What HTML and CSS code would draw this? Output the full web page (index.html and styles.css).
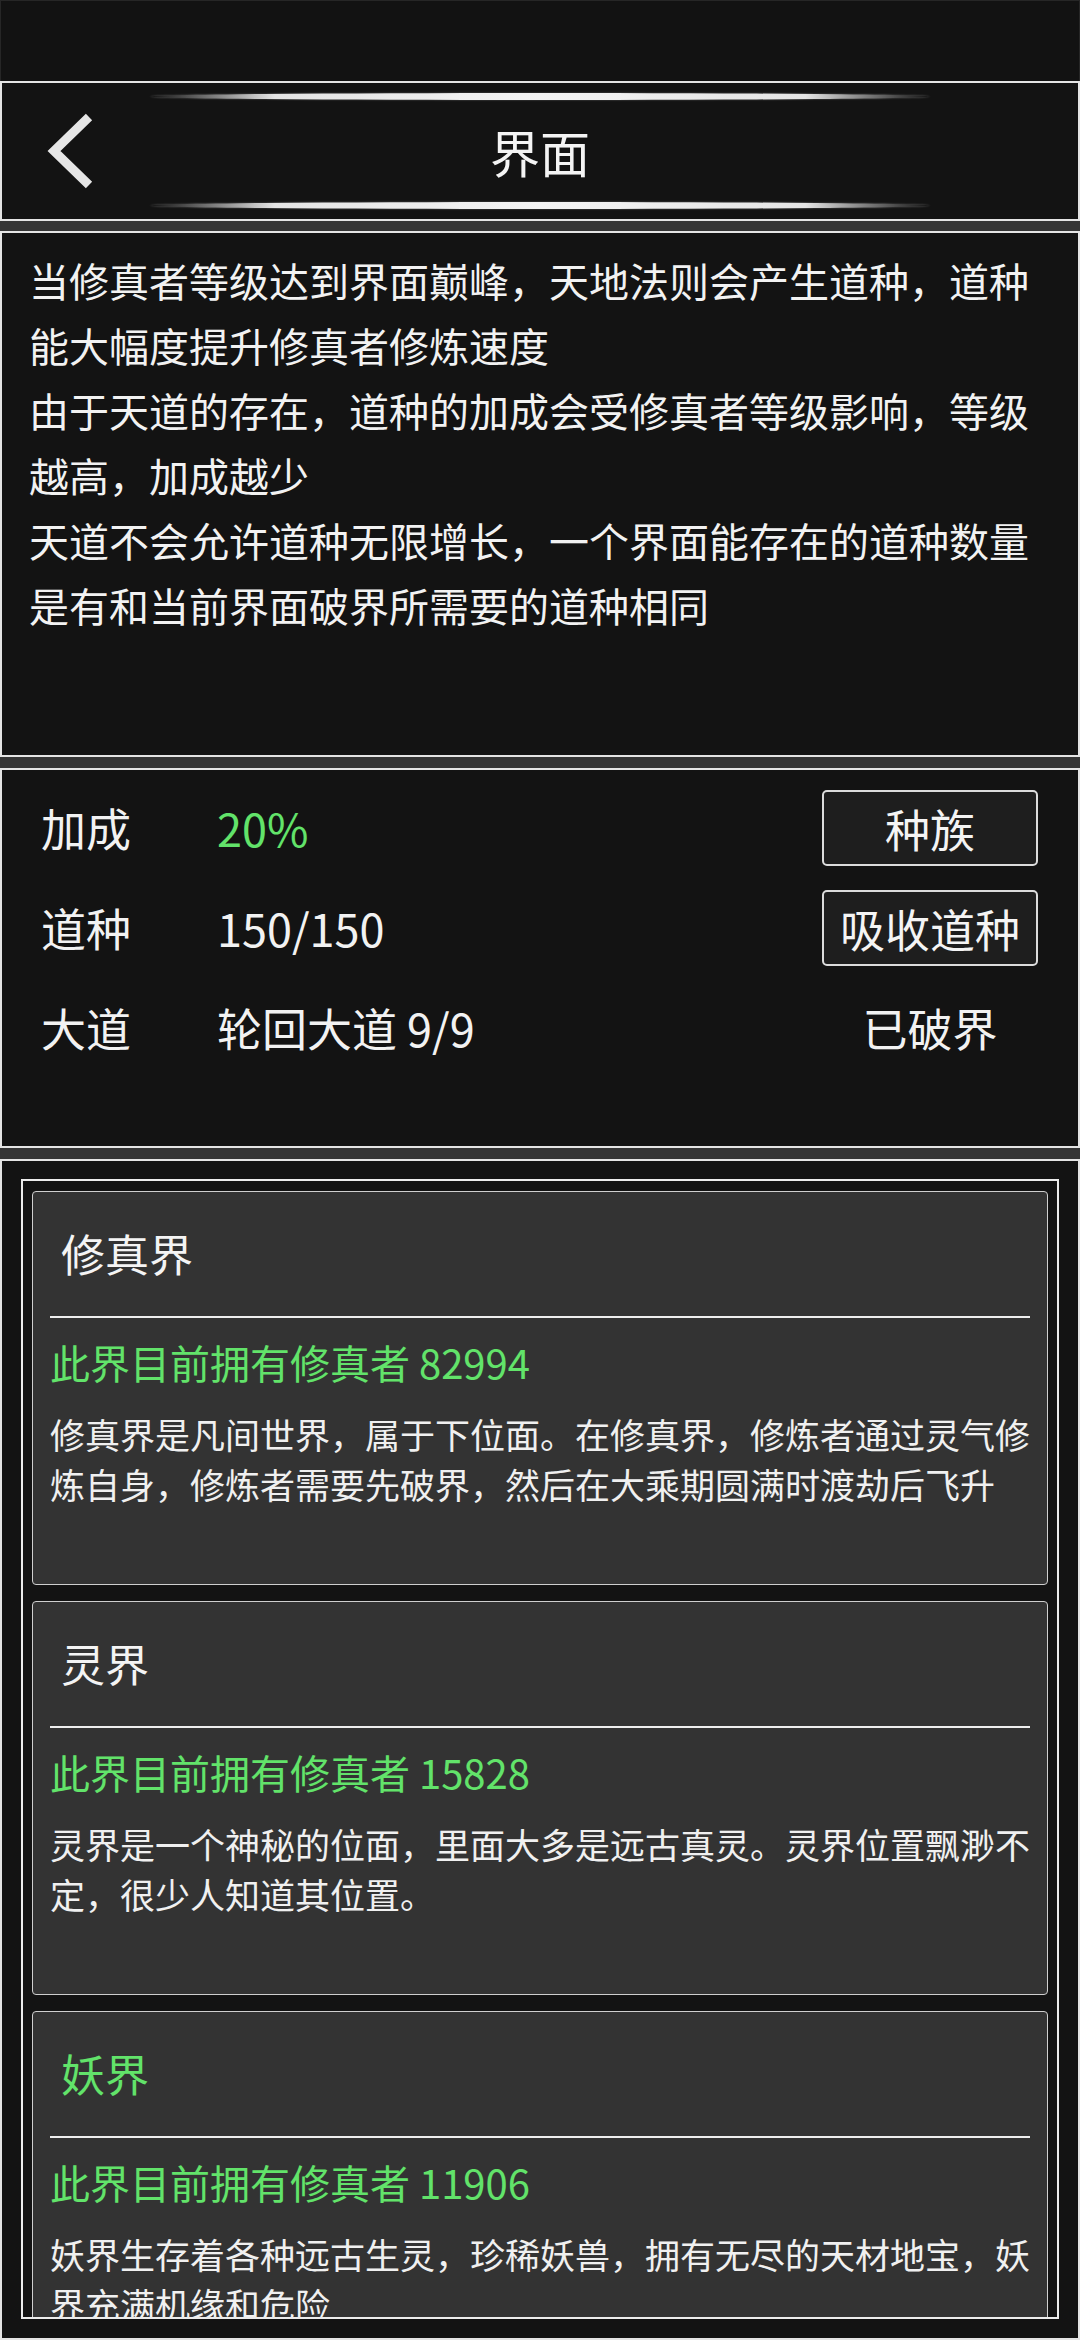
FILE: index.html
```html
<!DOCTYPE html>
<html lang="zh-CN">
<head>
<meta charset="utf-8">
<title>界面</title>
<link rel="stylesheet" href="styles.css">
</head>
<body>
<div class="status"></div>

<header class="panel header">
  <div class="glow"></div>
  <div class="bar">
    <div class="back">
      <svg width="60" height="80" viewBox="0 0 60 80" aria-hidden="true">
        <polyline points="47,6 12,40 47,74" fill="none" stroke="#e6e6e6" stroke-width="9" stroke-linecap="butt" stroke-linejoin="miter"/>
      </svg>
    </div>
    <h1 class="title">界面</h1>
    <div class="spacer"></div>
  </div>
  <div class="glow"></div>
</header>

<section class="panel desc">
  <p>当修真者等级达到界面巅峰，天地法则会产生道种，道种能大幅度提升修真者修炼速度</p>
  <p>由于天道的存在，道种的加成会受修真者等级影响，等级越高，加成越少</p>
  <p>天道不会允许道种无限增长，一个界面能存在的道种数量是有和当前界面破界所需要的道种相同</p>
</section>

<section class="panel stats">
  <div class="label">加成</div>
  <div class="value green">20%</div>
  <button class="btn">种族</button>

  <div class="label">道种</div>
  <div class="value">150/150</div>
  <button class="btn">吸收道种</button>

  <div class="label">大道</div>
  <div class="value">轮回大道 9/9</div>
  <div class="state">已破界</div>
</section>

<section class="panel list">
  <div class="frame">
    <article class="card">
      <h2 class="card-title">修真界</h2>
      <div class="rule"></div>
      <div class="count">此界目前拥有修真者 82994</div>
      <p class="card-text">修真界是凡间世界，属于下位面。在修真界，修炼者通过灵气修炼自身，修炼者需要先破界，然后在大乘期圆满时渡劫后飞升</p>
    </article>
    <article class="card">
      <h2 class="card-title">灵界</h2>
      <div class="rule"></div>
      <div class="count">此界目前拥有修真者 15828</div>
      <p class="card-text">灵界是一个神秘的位面，里面大多是远古真灵。灵界位置飘渺不定，很少人知道其位置。</p>
    </article>
    <article class="card">
      <h2 class="card-title green">妖界</h2>
      <div class="rule"></div>
      <div class="count">此界目前拥有修真者 11906</div>
      <p class="card-text">妖界生存着各种远古生灵，珍稀妖兽，拥有无尽的天材地宝，妖界充满机缘和危险</p>
    </article>
  </div>
</section>
</body>
</html>
```

FILE: styles.css
```css
* {
  box-sizing: border-box;
}

html, body {
  margin: 0;
  padding: 0;
}

body {
  width: 1080px;
  height: 2340px;
  overflow: hidden;
  background: #353535;
  color: #f2f2f2;
  font-family: "Noto Sans CJK SC", "Noto Sans", sans-serif;
}

.status {
  height: 81px;
  background: #121212;
  border: 1px solid #262626;
  border-bottom: none;
}

.panel {
  background: #131313;
  border: 2px solid #e4e4e4;
}

/* header */
.header {
  height: 140px;
  margin-bottom: 10px;
  padding: 10px 0;
  display: flex;
  flex-direction: column;
}

.glow {
  height: 7px;
  margin: 0 148px;
  border-radius: 50%;
  background: linear-gradient(90deg,
    rgba(255, 255, 255, 0) 0%,
    rgba(220, 220, 220, 0.45) 7%,
    rgba(240, 240, 240, 0.95) 16%,
    #f4f4f4 50%,
    rgba(240, 240, 240, 0.95) 84%,
    rgba(220, 220, 220, 0.45) 93%,
    rgba(255, 255, 255, 0) 100%);
  box-shadow: 0 0 2px rgba(255, 255, 255, 0.35);
}

.bar {
  flex: 1;
  display: grid;
  grid-template-columns: 1fr auto 1fr;
  align-items: center;
}

.back {
  padding-left: 40px;
  display: flex;
  align-items: center;
}

.back svg {
  display: block;
}

.title {
  margin: 0;
  font-size: 50px;
  font-weight: 400;
  line-height: 1;
  color: #f4f4f4;
}

/* description */
.desc {
  height: 526px;
  margin-bottom: 11px;
  padding: 15px 27px;
  font-size: 40px;
  line-height: 65px;
}

.desc p {
  margin: 0;
}

/* stats */
.stats {
  height: 380px;
  margin-bottom: 11px;
  padding: 20px 40px 0 39px;
  display: grid;
  grid-template-columns: 176px 1fr 216px;
  grid-auto-rows: 76px;
  row-gap: 24px;
  align-content: start;
  align-items: center;
  font-size: 45px;
}

.label,
.value,
.state {
  line-height: 76px;
  white-space: nowrap;
}

.state {
  text-align: center;
}

.green {
  color: #62e36a;
}

.btn {
  height: 76px;
  width: 216px;
  padding: 0;
  background: #1e1e1e;
  border: 2px solid #dcdcdc;
  border-radius: 5px;
  color: #f4f4f4;
  font-family: inherit;
  font-size: 45px;
  line-height: 1;
}

/* list */
.list {
  height: 1181px;
  padding: 18px 19px 0;
}

.frame {
  height: 1140px;
  border: 2px solid #ececec;
  padding: 10px 9px 0;
  overflow: hidden;
  display: flex;
  flex-direction: column;
  gap: 16px;
}

.card {
  flex-shrink: 0;
  height: 394px;
  background: #333333;
  border: 1px solid #cfcfcf;
  border-radius: 4px;
  padding: 0 17px;
}

.card-title {
  margin: 0;
  height: 122px;
  padding-left: 11px;
  display: flex;
  align-items: center;
  font-size: 44px;
  font-weight: 400;
  color: #f4f4f4;
}

.card-title + .rule {
  margin-top: 2px;
}

.card-title.green {
  color: #62e36a;
}

.rule {
  height: 2px;
  background: #eeeeee;
}

.count {
  margin-top: 19px;
  font-size: 40px;
  line-height: 50px;
  color: #62e36a;
}

.card-text {
  margin: 22px 0 0;
  font-size: 35px;
  line-height: 50px;
  color: #f0f0f0;
}
```
